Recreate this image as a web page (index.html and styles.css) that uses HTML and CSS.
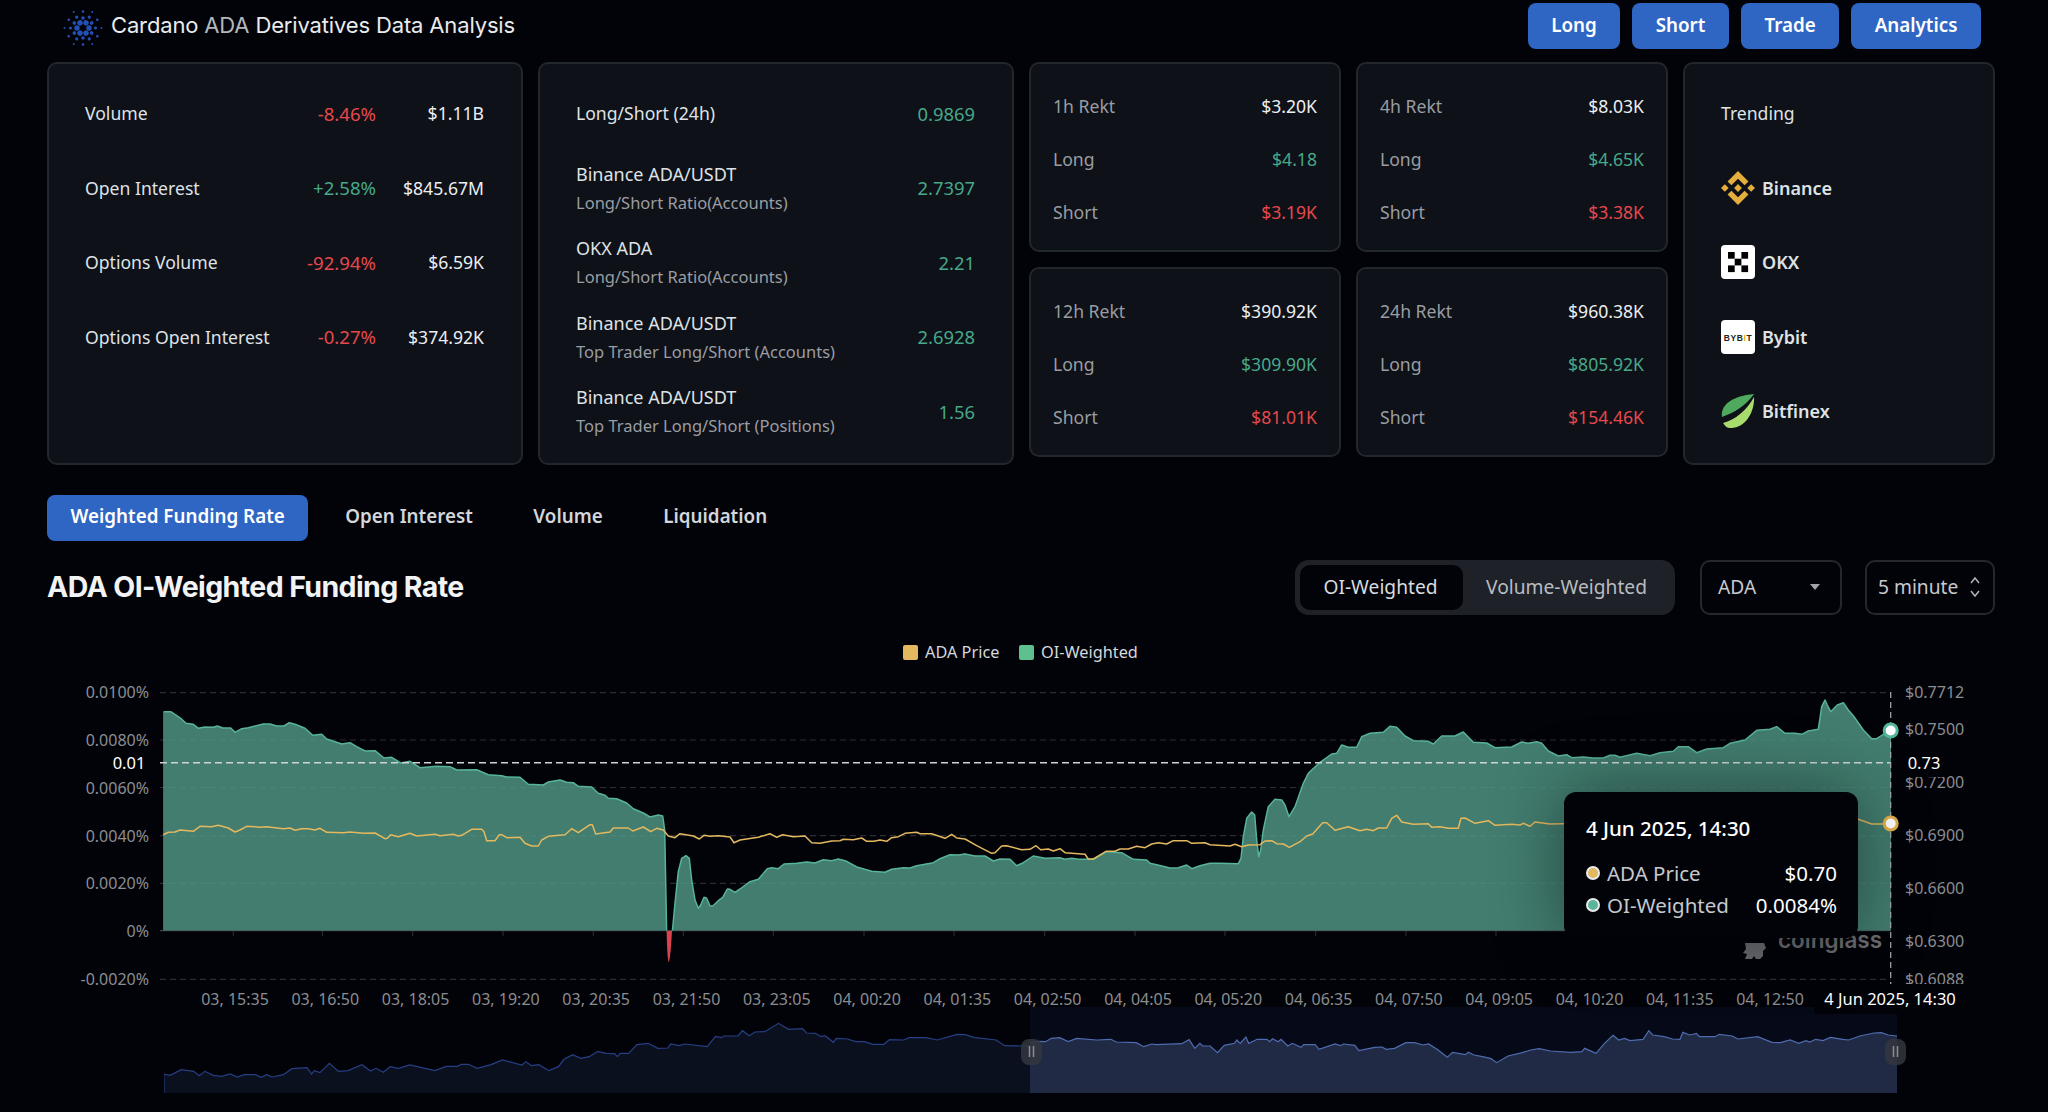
FILE: index.html
```html
<!DOCTYPE html>
<html lang="en">
<head>
    <meta charset="UTF-8">
    <title>Cardano ADA Derivatives Data Analysis</title>
    <link rel="stylesheet" href="styles.css">
</head>
<body>
<div class="page">
    <div class="topbar">
        <div class="brand">
            <svg class="brand-logo" viewBox="-20 -20 40 40">
                <defs>
                    <g id="ada-spoke">
                        <circle cx="0" cy="-10" r="1.8"/>
                        <circle cx="0" cy="-16.5" r="1.3"/>
                        <g transform="rotate(30)">
                            <circle cx="0" cy="-6" r="2.7"/>
                            <circle cx="0" cy="-12.5" r="1.6"/>
                            <circle cx="0" cy="-18.5" r="1"/>
                        </g>
                    </g>
                </defs>
                <use href="#ada-spoke"/>
                <use href="#ada-spoke" transform="rotate(60)"/>
                <use href="#ada-spoke" transform="rotate(120)"/>
                <use href="#ada-spoke" transform="rotate(180)"/>
                <use href="#ada-spoke" transform="rotate(240)"/>
                <use href="#ada-spoke" transform="rotate(300)"/>
            </svg>
            <h1 class="brand-title">Cardano <span class="dim">ADA</span> Derivatives Data Analysis</h1>
        </div>
        <div class="nav-btns">
            <button class="btn">Long</button>
            <button class="btn">Short</button>
            <button class="btn">Trade</button>
            <button class="btn">Analytics</button>
        </div>
    </div>

    <div class="cards">
        <div class="card card-big">
            <div class="row"><span class="name">Volume</span><span class="pct red">-8.46%</span><span class="val">$1.11B</span></div>
            <div class="row"><span class="name">Open Interest</span><span class="pct green">+2.58%</span><span class="val">$845.67M</span></div>
            <div class="row"><span class="name">Options Volume</span><span class="pct red">-92.94%</span><span class="val">$6.59K</span></div>
            <div class="row"><span class="name">Options Open Interest</span><span class="pct red">-0.27%</span><span class="val">$374.92K</span></div>
        </div>

        <div class="card card-big">
            <div class="row"><span class="name">Long/Short (24h)</span><span class="ratio green">0.9869</span></div>
            <div class="row"><div class="name two">Binance ADA/USDT<small>Long/Short Ratio(Accounts)</small></div><span class="ratio green">2.7397</span></div>
            <div class="row"><div class="name two">OKX ADA<small>Long/Short Ratio(Accounts)</small></div><span class="ratio green">2.21</span></div>
            <div class="row"><div class="name two">Binance ADA/USDT<small>Top Trader Long/Short (Accounts)</small></div><span class="ratio green">2.6928</span></div>
            <div class="row"><div class="name two">Binance ADA/USDT<small>Top Trader Long/Short (Positions)</small></div><span class="ratio green">1.56</span></div>
        </div>

        <div class="rekt-grid">
            <div class="card card-rekt">
                <div class="rekt-row"><span>1h Rekt</span><span class="val">$3.20K</span></div>
                <div class="rekt-row"><span>Long</span><span class="green">$4.18</span></div>
                <div class="rekt-row"><span>Short</span><span class="red">$3.19K</span></div>
            </div>
            <div class="card card-rekt">
                <div class="rekt-row"><span>4h Rekt</span><span class="val">$8.03K</span></div>
                <div class="rekt-row"><span>Long</span><span class="green">$4.65K</span></div>
                <div class="rekt-row"><span>Short</span><span class="red">$3.38K</span></div>
            </div>
            <div class="card card-rekt">
                <div class="rekt-row"><span>12h Rekt</span><span class="val">$390.92K</span></div>
                <div class="rekt-row"><span>Long</span><span class="green">$309.90K</span></div>
                <div class="rekt-row"><span>Short</span><span class="red">$81.01K</span></div>
            </div>
            <div class="card card-rekt">
                <div class="rekt-row"><span>24h Rekt</span><span class="val">$960.38K</span></div>
                <div class="rekt-row"><span>Long</span><span class="green">$805.92K</span></div>
                <div class="rekt-row"><span>Short</span><span class="red">$154.46K</span></div>
            </div>
        </div>

        <div class="card card-trend">
            <div class="row"><span class="name">Trending</span></div>
            <div class="row ex">
                <svg class="ex-logo" viewBox="0 0 126.61 126.61"><path fill="#e4ae3c" d="M38.73 53.2l24.59-24.58 24.6 24.6 14.3-14.31L63.32 0 24.43 38.9zM0 63.31l14.3-14.31 14.31 14.31-14.31 14.3zM38.73 73.41l24.59 24.59 24.6-24.6 14.31 14.29-38.9 38.91-38.91-38.88-.02-.02zM98.01 63.31l14.3-14.31 14.31 14.3-14.31 14.32zM77.83 63.3L63.32 48.78 52.59 59.51l-1.24 1.23-2.54 2.54 14.51 14.5 14.51-14.47z"/></svg>
                <span>Binance</span>
            </div>
            <div class="row ex">
                <svg class="ex-logo" viewBox="0 0 34 34">
                    <rect width="34" height="34" rx="4" fill="#fff"/>
                    <rect x="7" y="7" width="6.7" height="6.7"/>
                    <rect x="20.4" y="7" width="6.7" height="6.7"/>
                    <rect x="13.7" y="13.7" width="6.7" height="6.7"/>
                    <rect x="7" y="20.4" width="6.7" height="6.7"/>
                    <rect x="20.4" y="20.4" width="6.7" height="6.7"/>
                </svg>
                <span>OKX</span>
            </div>
            <div class="row ex">
                <svg class="ex-logo" viewBox="0 0 34 34">
                    <rect width="34" height="34" rx="4" fill="#fff"/>
                    <text class="bybit-mark" x="17" y="20.5" text-anchor="middle">BYB<tspan fill="#f7a600">I</tspan>T</text>
                </svg>
                <span>Bybit</span>
            </div>
            <div class="row ex">
                <svg class="ex-logo" viewBox="0 0 34 34">
                    <path fill="#4fa95f" d="M1 23C-1 12 10 2 33 0C25 12 12 19 1 23Z"/>
                    <path fill="#a8dc6c" d="M2 29C14 26 26 16 33 3C34 18 24 35 9 34C6 34 4 32 2 29Z"/>
                </svg>
                <span>Bitfinex</span>
            </div>
        </div>
    </div>

    <div class="tabs">
        <button class="tab active">Weighted Funding Rate</button>
        <button class="tab">Open Interest</button>
        <button class="tab">Volume</button>
        <button class="tab">Liquidation</button>
    </div>

    <div class="chart-head">
        <h2 class="chart-title">ADA OI-Weighted Funding Rate</h2>
        <div class="controls">
            <div class="segment">
                <span class="seg-item on">OI-Weighted</span>
                <span class="seg-item">Volume-Weighted</span>
            </div>
            <div class="select select-coin">
                <span>ADA</span>
                <i class="caret"></i>
            </div>
            <div class="select select-time">
                <span>5 minute</span>
                <svg class="updown" viewBox="0 0 12 24"><path d="M2 8l4-5 4 5M2 16l4 5 4-5"/></svg>
            </div>
        </div>
    </div>
</div>

<div class="chart">
    <svg class="chart-svg" viewBox="0 630 2048 482">
        <defs>
            <clipPath id="plot-clip"><rect x="163.5" y="690" width="1727.5" height="240.5"/></clipPath>
            <clipPath id="left-clip"><rect x="164" y="1007" width="866" height="86"/></clipPath>
            <clipPath id="right-clip"><rect x="1030" y="1007" width="867" height="86"/></clipPath>
        </defs>

        <!-- legend -->
        <rect x="903" y="645" width="15" height="15" rx="2" fill="#e3b85f"/>
        <text class="legend" x="925" y="658">ADA Price</text>
        <rect x="1019" y="645" width="15" height="15" rx="2" fill="#5fc08f"/>
        <text class="legend" x="1041" y="658">OI-Weighted</text>

        <!-- grid -->
        <g class="grid">
            <line x1="160" x2="1891" y1="692.7" y2="692.7"/>
            <line x1="160" x2="1891" y1="740" y2="740"/>
            <line x1="160" x2="1891" y1="787.5" y2="787.5"/>
            <line x1="160" x2="1891" y1="835.7" y2="835.7"/>
            <line x1="160" x2="1891" y1="883.3" y2="883.3"/>
            <line x1="160" x2="1891" y1="979.3" y2="979.3"/>
        </g>
        <line class="base" x1="160" x2="1891" y1="930.7" y2="930.7"/>
        <path class="ticks" d="M233.3 931v5M322.3 931v5M412.7 931v5M503 931v5M593.3 931v5M683.3 931v5M773.3 931v5M864 931v5M954 931v5M1044.7 931v5M1135 931v5M1225 931v5M1315.7 931v5M1406 931v5M1496 931v5"/>

        <!-- OI-weighted area -->
        <path class="oi-area" clip-path="url(#plot-clip)" d="M163.3 935L163.3 711.7L170.7 711.7L176.7 715.7L180.7 718.3L186 723.3L193.3 724.3L198.3 728.3L205 727L213.3 727.3L217.3 726L222.7 728L230.7 728L235 732.3L241.7 728.7L248.3 727.7L263.3 724L270 724L276.7 726L284 726L289.3 722.7L295 724.3L305 728.3L312.7 735.3L321.7 734.3L326.7 739L335 741.7L341.7 744L350 742.7L356.7 746.7L365 751L375 750.7L384 758L391.7 757.3L400.7 763L410 761.3L420 767.7L436.7 766.3L450 766.7L456.7 770L476.7 769.7L488.3 774.7L501.7 775.7L506.7 777L520 777.3L528.3 784.3L543.3 785L548.3 782L560 780L566.7 782.3L573.3 782.7L578.3 786.3L591.7 787L598.3 793.3L605 795.3L608.3 798.3L616.7 798.7L626.7 803L633.3 808.7L643.3 813L650 817L658.3 815L662.7 816L664.7 830L666.7 935L672 935L675 903.3L678.3 871.7L681.7 858.3L686 855.7L689.3 858.3L691.7 880L695 900L698.3 908.3L700.7 905L704 897.3L706.7 898.3L710 906L712.7 906L718.3 900.7L722.7 897.3L727.3 889L730 889.3L735 892.3L740 889L750 881.7L758.3 879.3L767.3 868.7L771.7 867.7L778.3 868.7L784 864L796.7 863.3L806.7 862L815 863L823.3 859.7L831.7 860.7L838.3 859L846.7 861.3L856.7 867L871.7 871.3L885 872.3L891.7 869.3L903.3 867.7L910 868L916.7 865.7L933.3 862.7L940 858.7L950 854.7L958.3 855L965 854L975 856L985 856L993.3 861L1000 859L1010 859.3L1016.7 865.7L1023.3 862.7L1033.3 856L1045 858.3L1060 857.7L1065 859.3L1071.7 858.3L1078.3 859.3L1093.3 859.3L1106.7 851.7L1121.7 852.7L1133.3 859.3L1146.7 860L1150 863.3L1156.7 864.7L1170 868L1178.3 867.7L1186.7 865L1191.7 868.7L1200 865.7L1210 863.3L1220 863.3L1238.3 863.7L1241 858.3L1243.3 836.7L1246.7 818.3L1251.7 812L1254.7 815L1256.7 840L1258.7 856.7L1260.7 850L1263.3 830L1268.3 806.7L1275 799.3L1281.7 800L1285 805L1289 816.7L1295 806.7L1303.3 783.3L1308.3 773.3L1320 762.3L1331.7 754L1336.7 753.3L1341.7 745L1348.3 747.3L1356.7 747.3L1361.7 736.7L1370 733.3L1383.3 732.3L1390 726.3L1396.7 727.3L1405 736L1413.3 740.7L1428.3 741.3L1433.3 744L1441.7 736L1455 736L1463.3 732L1473.3 742.3L1486.7 743L1495 747.7L1511.7 747L1521.7 742L1528.3 743.3L1536.7 741.7L1541.7 743.3L1548.3 751L1558.3 756L1566.7 754.7L1571.7 757.7L1583.3 757L1593.3 758L1603.3 758L1610 755.3L1615 755.3L1620 757.3L1636.7 753.3L1650 755.7L1660 752.7L1673.3 751.3L1678.3 746.7L1688.3 746.7L1696.7 752.7L1706.7 749L1723.3 747.7L1730 743.3L1745 740L1756.7 730.3L1770 729.3L1776.7 726.7L1785 733.3L1795 733.3L1801.7 734.3L1808.3 731L1818.3 729.3L1821.7 706.7L1825 700L1827.3 705L1830.7 711.7L1837.3 705L1843.3 702.7L1848.3 710L1853.3 715.7L1863.3 730L1871.7 738.7L1876.7 738.7L1885 733.3L1891 730.3L1895 935Z"/>
        <path class="oi-neg" d="M666.6 931C667 952 668 962 668.7 962C669.6 962 671 950 672 931Z"/>

        <!-- ADA price -->
        <path class="price-line" d="M163.3 834.7L168.3 832.3L175 832L180 830L193.3 831.3L200 826.3L211.7 826.7L218.3 825.3L228.3 828L235 832L240 830L246.7 826.3L255 826.7L260 827.3L266.7 826.7L283.3 828.7L290 828L295 830.3L301.7 828.7L308.3 828.7L315 830L320 828.3L326.7 832.3L343.3 832.7L350 832L363.3 833.3L375 833L385 838.7L387.3 838.3L390.7 834.7L398.3 836.7L410 833.3L416.7 836L435 834.3L440 835.7L453.3 834.3L458.3 836L461.7 835.3L471.7 829.3L481.7 829.3L484 831.7L486.7 840.7L495 840.7L499.3 834.7L501.7 834.7L506.7 837.7L520 837.3L525 843.3L531.7 846L538.3 846L541.7 840L548.3 836.3L565 834.7L571.7 828.7L578.3 832.7L590 824.7L592.3 824.7L595.7 834L610 832L613.3 828L628.3 828L632.7 831L643.3 827L650.7 831.7L656.7 828.3L663.3 830L668.3 836L675 837.7L680 833.7L693.3 836L699.3 839L704 835.3L710 836.3L718.3 835.7L730 837L734 842.7L740 840L758.3 837.3L770 833.7L776.7 837.3L782.7 834.7L793.3 836.7L805 836L811.7 842.7L820 843.3L831.7 841L840 840.7L843.3 839.3L853.3 839.7L861.7 838L866.7 841.3L874 841.3L880 840L886.7 841.3L891.7 837.7L898.3 836.7L905 833.3L916.7 832.3L920 833.7L931.7 833.7L945 838.3L951.7 834.3L956.7 838L965 839L976.7 845.7L991.7 853.3L995 852.7L1001.7 846L1006.7 845.7L1021.7 849.7L1030 849.3L1036 845.7L1040.7 849.7L1048.3 849L1053.3 851L1060 848.7L1065 852.7L1085 854.3L1088.3 859L1093.3 859L1106 851.3L1115 851.3L1120 849L1128.3 849L1136.7 846.3L1145 847.7L1151.7 844L1158.3 842.7L1166.7 844L1173.3 840.7L1186.7 840.7L1191.7 843.3L1205 842.7L1210 844.7L1230 846L1235 844.3L1241.7 846.7L1248.3 845L1260 844.7L1265 841L1271.7 840.7L1276.7 843.7L1283.3 844L1289.3 847.3L1300 841.7L1306.7 836L1312.7 834L1322.7 822.7L1326.7 822.7L1335 830.3L1348.3 826.7L1360 830.7L1366.7 829.3L1373.3 830.7L1378.3 828L1386.7 828L1391.7 818.3L1396.7 815.3L1401.7 822L1413.3 824.3L1428.3 823.7L1431.7 827.3L1440 826.7L1448.3 828.3L1458.3 828.3L1461 818.3L1465 818L1475 823.3L1488.3 820.7L1495 825.3L1511.7 824.3L1520 825L1523.3 823.3L1530 826.3L1535 822L1550 824L1563.3 823.7L1700 823L1858.3 819.3L1871.7 824L1885 824L1890 823.3"/>

        <!-- watermark, the tooltip hides its top -->
        <path class="mark-icon" d="M1745 943h19l2 5-3 3v5l-3 3h-4l-2-3-2 3h-7l2-5-4-1 3-4z"/>
        <text class="mark-text" x="1778" y="948">coinglass</text>

        <!-- crosshair -->
        <line class="cross" x1="160" x2="1891" y1="762.7" y2="762.7"/>
        <line class="cross-v" x1="1890.7" x2="1890.7" y1="692" y2="984"/>
        <circle class="dot-oi" cx="1890.7" cy="730.5" r="6.5"/>
        <circle class="dot-price" cx="1890.7" cy="823.5" r="6.5"/>

        <!-- left axis -->
        <g class="axis" text-anchor="end">
            <text x="149" y="697.5">0.0100%</text>
            <text x="149" y="746">0.0080%</text>
            <text x="149" y="794">0.0060%</text>
            <text x="149" y="841.5">0.0040%</text>
            <text x="149" y="889">0.0020%</text>
            <text x="149" y="937">0%</text>
            <text x="149" y="984.5">-0.0020%</text>
        </g>
        <rect class="flag" x="104" y="748" width="45" height="30" rx="3"/>
        <text class="flag-text" x="129" y="768.5" text-anchor="middle">0.01</text>

        <!-- right axis -->
        <g class="axis">
            <text x="1905" y="697.5">$0.7712</text>
            <text x="1905" y="734.5">$0.7500</text>
            <text x="1905" y="788">$0.7200</text>
            <text x="1905" y="840.5">$0.6900</text>
            <text x="1905" y="894">$0.6600</text>
            <text x="1905" y="946.5">$0.6300</text>
            <text x="1905" y="984.5">$0.6088</text>
        </g>
        <rect class="flag" x="1898" y="746" width="52" height="31" rx="3"/>
        <text class="flag-text" x="1924" y="768.5" text-anchor="middle">0.73</text>

        <!-- bottom axis -->
        <g class="axis" text-anchor="middle">
            <text x="235" y="1004.5">03, 15:35</text>
            <text x="325.3" y="1004.5">03, 16:50</text>
            <text x="415.6" y="1004.5">03, 18:05</text>
            <text x="505.9" y="1004.5">03, 19:20</text>
            <text x="596.2" y="1004.5">03, 20:35</text>
            <text x="686.5" y="1004.5">03, 21:50</text>
            <text x="776.8" y="1004.5">03, 23:05</text>
            <text x="867.1" y="1004.5">04, 00:20</text>
            <text x="957.4" y="1004.5">04, 01:35</text>
            <text x="1047.7" y="1004.5">04, 02:50</text>
            <text x="1138" y="1004.5">04, 04:05</text>
            <text x="1228.3" y="1004.5">04, 05:20</text>
            <text x="1318.6" y="1004.5">04, 06:35</text>
            <text x="1408.9" y="1004.5">04, 07:50</text>
            <text x="1499.2" y="1004.5">04, 09:05</text>
            <text x="1589.5" y="1004.5">04, 10:20</text>
            <text x="1679.8" y="1004.5">04, 11:35</text>
            <text x="1770" y="1004.5">04, 12:50</text>
        </g>

        <!-- range slider -->
        <rect class="zoom-band" x="1030" y="1007" width="867" height="86"/>
        <g clip-path="url(#left-clip)">
            <g transform="translate(160 1000) scale(.5612 .3333)">
                <path class="zoom-left" d="M7 222L18 226L38 209L60 214L70 227L80 214L95 226L110 229L125 222L138 231L150 224L170 224L180 232L190 224L200 231L220 224L235 206L262 203L270 222L275 212L285 218L302 190L318 214L335 212L360 194L375 213L385 205L398 217L410 200L425 205L445 195L480 208L490 212L510 199L530 199L537 193L550 193L565 205L590 194L610 180L645 195L652 185L662 197L675 194L693 212L710 200L720 178L735 164L750 175L765 170L780 154L795 160L810 161L815 170L820 160L835 160L850 134L870 130L887 145L905 144L910 132L925 137L935 132L975 140L990 109L1000 113L1005 108L1030 108L1038 92L1050 107L1060 96L1078 95L1102 70L1120 88L1145 86L1152 99L1168 100L1178 110L1185 107L1200 127L1205 115L1225 117L1240 125L1255 125L1270 133L1290 133L1300 119L1325 120L1335 113L1365 113L1385 120L1420 103L1435 104L1450 112L1490 120L1505 137L1540 138L1570 130V300H7Z"/>
            </g>
        </g>
        <g clip-path="url(#right-clip)">
            <g transform="translate(1020 1000) scale(.5675 .3333)">
                <path class="zoom-right" d="M0 130L33 124L45 125L55 115L70 113L85 125L100 115L135 120L160 118L170 126L205 128L218 140L232 132L240 134L285 131L298 119L308 145L317 130L322 138L335 138L348 158L360 136L378 130L382 120L388 130L398 111L403 130L418 118L435 118L440 125L445 116L455 125L460 118L472 138L480 130L495 142L500 134L520 134L527 148L555 132L565 137L570 132L590 136L597 152L625 142L638 141L645 148L660 145L680 128L695 128L710 135L720 132L735 148L753 172L762 157L785 164L790 157L800 165L815 170L830 176L840 188L860 168L885 158L900 150L915 146L935 153L970 157L990 155L995 145L1015 160L1030 130L1045 106L1055 120L1065 115L1075 122L1098 118L1108 92L1115 105L1135 110L1150 117L1163 118L1168 97L1180 105L1192 100L1197 110L1225 110L1232 103L1255 108L1265 117L1300 110L1325 127L1340 128L1357 120L1372 130L1385 122L1392 126L1402 118L1415 122L1428 112L1450 118L1460 120L1480 108L1505 99L1518 98L1530 105L1545 108L1570 108V300H0Z"/>
            </g>
        </g>
        <rect class="handle" x="1021" y="1039" width="21" height="26" rx="8"/>
        <path class="handle-bars" d="M1029.5 1046v11M1033.5 1046v11"/>
        <rect class="handle" x="1885" y="1039" width="21" height="26" rx="8"/>
        <path class="handle-bars" d="M1893.5 1046v11M1897.5 1046v11"/>

        <rect class="flag" x="1814" y="984" width="152" height="30" rx="3"/>
        <text class="flag-text" x="1890" y="1004.5" text-anchor="middle">4 Jun 2025, 14:30</text>
    </svg>

    <div class="tooltip">
        <div class="tip-title">4 Jun 2025, 14:30</div>
        <div class="tip-row"><i class="tip-dot yellow"></i><span class="tip-label">ADA Price</span><span class="tip-val">$0.70</span></div>
        <div class="tip-row"><i class="tip-dot teal"></i><span class="tip-label">OI-Weighted</span><span class="tip-val">0.0084%</span></div>
    </div>
</div>
</body>
</html>
```

FILE: styles.css
```css
* {
    box-sizing: border-box;
}
html, body {
    margin: 0;
    padding: 0;
    background-color: #020308;
}
body {
    font-family: "Noto Sans", "Liberation Sans", sans-serif;
    font-size: 17.6px;
    color: #dfe2e6;
    width: 2048px;
    height: 1112px;
    overflow: hidden;
}
.page {
    padding: 0 53px 0 47px;
}

/* top bar */
.topbar {
    display: flex;
    justify-content: space-between;
    height: 62px;
    padding: 3px 14px 0 16px;
}
.brand {
    display: flex;
    align-items: flex-start;
    gap: 8px;
}
.brand-logo {
    width: 40px;
    height: 40px;
    margin-top: 5px;
    fill: #2450b4;
}
.brand-title {
    margin: 0;
    font-family: Inter, "Liberation Sans", sans-serif;
    font-size: 22px;
    font-weight: 400;
    letter-spacing: -.15px;
    line-height: 44px;
    color: #e9ebee;
    white-space: nowrap;
}
.dim {
    color: #b4b7bc;
}
.nav-btns {
    display: flex;
    gap: 12px;
}
.btn {
    height: 46px;
    padding: 0 23.5px 2px;
    border: 0;
    border-radius: 8px;
    background-color: #2f66c4;
    color: #fff;
    font-family: inherit;
    font-size: 18.8px;
    font-weight: 600;
}

/* stat cards */
.cards {
    display: flex;
    align-items: flex-start;
    gap: 15px;
}
.card {
    background-color: #0e1117;
    border: 2px solid #22262d;
    border-radius: 10px;
}
.card-big {
    width: 476px;
    height: 403px;
    padding: 12px 37px 0 36px;
}
.card-trend {
    width: 312px;
    height: 403px;
    padding: 12px 35px 0 36px;
}
.row {
    display: flex;
    align-items: center;
    height: 74.5px;
}
.name {
    flex: 1;
}
.name.two {
    font-size: 18px;
}
.name small {
    display: block;
    margin-top: 5px;
    font-size: 16.5px;
    color: #9a9da3;
}
.pct {
    font-size: 18.6px;
    text-align: right;
}
.ratio {
    font-size: 18.4px;
}
.val {
    color: #eceef1;
}
.row .val {
    width: 108px;
    text-align: right;
}
.green {
    color: #47a88a;
}
.red {
    color: #e5484d;
}
.rekt-grid {
    display: grid;
    grid-template-columns: 312px 312px;
    grid-auto-rows: 190px;
    column-gap: 15px;
    row-gap: 15px;
}
.card-rekt {
    padding: 15.5px 22px 0;
    color: #9a9da3;
}
.rekt-row {
    display: flex;
    justify-content: space-between;
    align-items: center;
    height: 53px;
}
.ex {
    gap: 7px;
    font-size: 18px;
    font-weight: 600;
}
.ex-logo {
    width: 34px;
    height: 34px;
}
.bybit-mark {
    font-family: "Liberation Sans", sans-serif;
    font-size: 8.5px;
    font-weight: 700;
    letter-spacing: .6px;
    fill: #222;
}

/* tabs */
.tabs {
    display: flex;
    gap: 13.5px;
    margin-top: 29.5px;
}
.tab {
    height: 46px;
    padding: 0 23.5px 3px;
    border: 0;
    border-radius: 8px;
    background: none;
    color: #d3d6da;
    font-family: inherit;
    font-size: 18.8px;
    font-weight: 600;
}
.tab.active {
    background-color: #2f66c4;
    color: #fff;
}

/* chart heading */
.chart-head {
    display: flex;
    justify-content: space-between;
    align-items: center;
    margin-top: 19.5px;
    height: 55px;
}
.chart-title {
    margin: 0;
    padding-bottom: 2px;
    font-family: Inter, "Liberation Sans", sans-serif;
    font-size: 28.5px;
    font-weight: 700;
    letter-spacing: -.6px;
    color: #f2f3f5;
}
.controls {
    display: flex;
    align-items: stretch;
    height: 55px;
    font-size: 19.2px;
}
.segment {
    display: flex;
    width: 380px;
    padding: 5px;
    border-radius: 14px;
    background-color: #1e2128;
}
.seg-item {
    display: flex;
    align-items: center;
    justify-content: center;
    flex: 1;
    padding-bottom: 2px;
    color: #b9bcc1;
}
.seg-item.on {
    flex: none;
    width: 163px;
    margin-right: 0;
    padding-right: 2px;
    border-radius: 10px;
    background-color: #020308;
    color: #d8dbdf;
}
.select {
    display: flex;
    align-items: center;
    justify-content: space-between;
    padding-bottom: 2px;
    border: 2px solid #24272e;
    border-radius: 10px;
    color: #c6c9ce;
}
.select-coin {
    width: 142px;
    margin-left: 25px;
    padding-left: 16px;
    padding-right: 20px;
}
.select-time {
    width: 130px;
    margin-left: 23px;
    padding-left: 11px;
    padding-right: 12px;
}
.caret {
    width: 0;
    height: 0;
    border-left: 5px solid transparent;
    border-right: 5px solid transparent;
    border-top: 6px solid #a0a3a8;
}
.updown {
    width: 12px;
    height: 24px;
    fill: none;
    stroke: #b0b3b8;
    stroke-width: 1.5;
}

/* chart */
.chart {
    position: relative;
    margin-top: 15px;
    height: 482px;
}
.chart-svg {
    display: block;
    width: 2048px;
    height: 482px;
    font-family: "Noto Sans", "Liberation Sans", sans-serif;
}
.legend {
    font-size: 16.3px;
    fill: #d5d8dc;
}
.grid line {
    stroke: #2a2d33;
    stroke-width: 1.2;
    stroke-dasharray: 6 4;
}
.base {
    stroke: #4a4e55;
    stroke-width: 1;
}
.ticks {
    stroke: #2e3137;
    fill: none;
}
.oi-area {
    fill: rgba(80, 152, 134, .82);
    stroke: #57b39a;
    stroke-width: 1.5;
    stroke-linejoin: round;
}
.oi-neg {
    fill: #d9434e;
}
.price-line {
    fill: none;
    stroke: #e3b85f;
    stroke-width: 1.5;
    stroke-linejoin: round;
}
.mark-icon {
    fill: #6c6d70;
}
.mark-text {
    font-family: Inter, "Liberation Sans", sans-serif;
    font-size: 22.5px;
    font-weight: 600;
    fill: #6c6d70;
}
.cross {
    stroke: #cfd3d8;
    stroke-width: 1.5;
    stroke-dasharray: 7 4;
}
.cross-v {
    stroke: #a9acb0;
    stroke-width: 1.2;
    stroke-dasharray: 6 4;
}
.dot-oi {
    fill: #fff;
    stroke: #52b69a;
    stroke-width: 3;
}
.dot-price {
    fill: #fff;
    stroke: #e3b04a;
    stroke-width: 3;
}
.axis {
    font-size: 16px;
    fill: #8b8d91;
}
.flag {
    fill: #020308;
}
.flag-text {
    font-size: 16.5px;
    fill: #fff;
}
.zoom-band {
    fill: #060a18;
}
.zoom-left {
    fill: #0b101f;
    stroke: #263f85;
    stroke-width: 1.2;
    vector-effect: non-scaling-stroke;
}
.zoom-right {
    fill: #212a45;
    stroke: #4f6cb0;
    stroke-width: 1.2;
    vector-effect: non-scaling-stroke;
}
.handle {
    fill: #33363d;
    fill-opacity: .85;
}
.handle-bars {
    stroke: #8a8d93;
    stroke-width: 1.5;
}

/* tooltip */
.tooltip {
    position: absolute;
    left: 1564px;
    top: 162px;
    width: 294px;
    height: 146px;
    padding: 20px 21px 0 22px;
    border-radius: 12px;
    background-color: #020308;
    box-shadow: 0 0 70px rgba(2, 3, 8, .45);
    font-size: 20.5px;
}
.tip-title {
    line-height: 32px;
    font-weight: 500;
    color: #fff;
    margin-bottom: 12.5px;
}
.tip-row {
    display: flex;
    align-items: center;
    height: 32px;
}
.tip-dot {
    flex: none;
    width: 14px;
    height: 14px;
    margin-right: 7px;
    border: 2px solid #e8eaed;
    border-radius: 50%;
}
.tip-dot.yellow {
    background-color: #e3b85f;
}
.tip-dot.teal {
    background-color: #5ab49c;
}
.tip-label {
    color: #c5c9cf;
}
.tip-val {
    margin-left: auto;
    color: #fff;
}
```
